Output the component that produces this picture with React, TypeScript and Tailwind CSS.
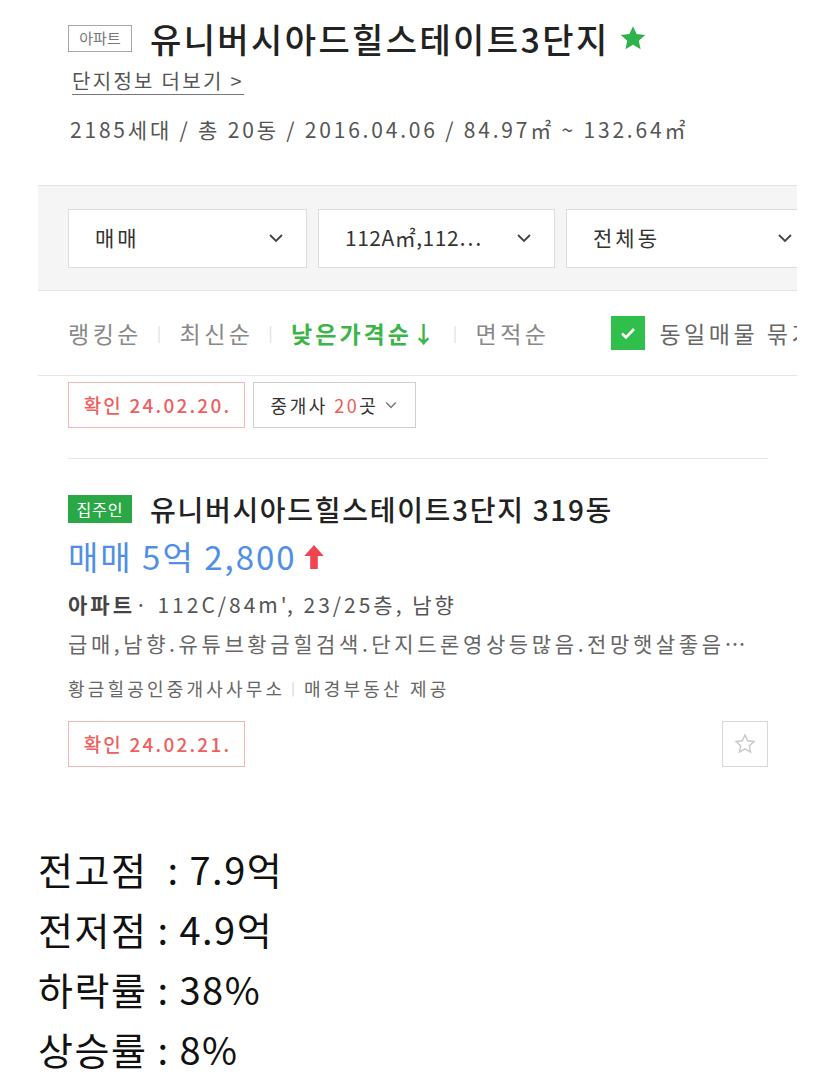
import React from "react";

const font = { fontFamily: '"Noto Sans CJK KR", "Noto Sans", sans-serif' };

function Chevron({ className = "" }: { className?: string }) {
  return (
    <svg viewBox="0 0 16 10" className={className} fill="none" stroke="currentColor" strokeWidth="1.8">
      <path d="M2 2l6 6 6-6" />
    </svg>
  );
}

function Select({ label, w, track }: { label: string; w: string; track: string }) {
  return (
    <div className={`flex h-[59px] shrink-0 items-center justify-between border border-[#dcdcdc] bg-white pl-[26px] pr-[22px] ${w}`}>
      <span className={`whitespace-nowrap text-[21px] text-[#333] ${track}`}>{label}</span>
      <Chevron className="h-[10px] w-[16px] text-[#444]" />
    </div>
  );
}

function ConfirmTag({ text }: { text: string }) {
  return (
    <div className="flex h-[46px] w-[177px] items-center justify-center border border-[#f5b5b5] pl-[2px] text-[19px] font-medium tracking-[2.2px] text-[#ef5f5f]">
      {text}
    </div>
  );
}

export default function App() {
  return (
    <div className="w-[827px] bg-white text-[#333]" style={font}>
      <div className="ml-[38px] w-[759px] overflow-hidden">
        {/* header */}
        <div className="pl-[30px] pt-[15px]">
          <div className="flex h-[46px] items-center">
            <span className="flex h-[27px] w-[64px] items-center justify-center border border-[#a8a8a8] text-[15px] text-[#777]">
              아파트
            </span>
            <span className="ml-[18px] text-[34px] font-medium tracking-[2.4px] text-[#222]">유니버시아드힐스테이트3단지</span>
            <svg viewBox="0 0 24 24" className="ml-[8px] h-[30px] w-[30px]" fill="#2eb24a">
              <path d="M12 2.5l2.9 6.3 6.9.7-5.2 4.6 1.5 6.8L12 17.4l-6.1 3.5 1.5-6.8-5.2-4.6 6.9-.7z" />
            </svg>
          </div>
          <div className="mt-[6px] flex h-[30px] items-center pl-[4px]">
            <span className="border-b border-[#777] pb-[1px] text-[20px] leading-[24px] tracking-[2.3px] text-[#555]">단지정보 더보기 &gt;</span>
          </div>
          <div className="mt-[18px] flex h-[30px] items-center whitespace-nowrap pl-[2px] text-[21px] tracking-[2.8px] text-[#555]">
            2185세대 / 총 20동 / 2016.04.06 / 84.97㎡ ~ 132.64㎡
          </div>
        </div>

        {/* filter box */}
        <div className="mt-[40px] flex h-[106px] items-center gap-[11px] overflow-hidden border-y border-[#e3e3e3] bg-[#f5f5f5] pl-[30px]">
          <Select label="매매" w="w-[239px]" track="tracking-[3px]" />
          <Select label="112A㎡,112⋯" w="w-[237px]" track="tracking-[0.5px]" />
          <Select label="전체동" w="w-[250px]" track="tracking-[3px]" />
        </div>

        {/* sort row */}
        <div className="flex h-[85px] items-center whitespace-nowrap border-b border-[#e6e6e6] pl-[30px] text-[23px] tracking-[3.5px] text-[#888]">
          <span>랭킹순</span>
          <span className="mx-[15px] text-[15px] text-[#ddd]">|</span>
          <span>최신순</span>
          <span className="mx-[15px] text-[15px] text-[#ddd]">|</span>
          <span className="font-bold tracking-[3px] text-[#3cb548]">낮은가격순↓</span>
          <span className="mx-[15px] text-[15px] text-[#ddd]">|</span>
          <span>면적순</span>
          <span className="ml-[62px] flex h-[34px] w-[34px] shrink-0 items-center justify-center bg-[#2fbf4a]">
            <svg viewBox="0 0 20 20" className="h-[20px] w-[20px]" fill="none" stroke="white" strokeWidth="2.6">
              <path d="M4 10.5l4 4 8-8.5" />
            </svg>
          </span>
          <span className="ml-[14px] text-[#666]">동일매물 묶기</span>
        </div>

        {/* confirm row */}
        <div className="pl-[30px] pt-[6px]">
          <div className="flex items-center gap-[8px]">
            <ConfirmTag text="확인 24.02.20." />
            <div className="flex h-[46px] w-[163px] items-center justify-center gap-[6px] border border-[#cfcfcf] text-[18px] tracking-[2.5px] text-[#333]">
              <span>
                중개사 <span className="text-[#ef5a5a]">20</span>곳
              </span>
              <Chevron className="h-[8px] w-[14px] text-[#777]" />
            </div>
          </div>
          <div className="mt-[30px] w-[700px] border-t border-[#e6e6e6]" />
        </div>

        {/* item */}
        <div className="pl-[30px] pt-[35px]">
          <div className="flex h-[30px] items-center">
            <span className="flex h-[28px] w-[64px] items-center justify-center bg-[#2aa845] text-[16px] tracking-[1px] text-white">집주인</span>
            <span className="ml-[18px] whitespace-nowrap text-[28px] font-medium tracking-[1.7px] text-[#222]">유니버시아드힐스테이트3단지 319동</span>
          </div>
          <div className="mt-[13px] flex h-[40px] items-center text-[33px] tracking-[2px] text-[#4f8fe6]">
            <span>매매 5억 2,800</span>
            <svg viewBox="0 0 20 24" className="ml-[6px] h-[26px] w-[22px]" fill="#f0444e">
              <path d="M10 1L19 11h-5.5v12h-7V11H1z" />
            </svg>
          </div>
          <div className="mt-[13px] flex h-[30px] items-center whitespace-nowrap text-[21px] tracking-[3px] text-[#555]">
            <span className="font-semibold text-[#444]">아파트</span>
            <span>· 112C/84m', 23/25층, 남향</span>
          </div>
          <div className="mt-[9px] flex h-[30px] items-center whitespace-nowrap text-[21px] tracking-[3.6px] text-[#666]">
            급매,남향.유튜브황금힐검색.단지드론영상등많음.전망햇살좋음…
          </div>
          <div className="mt-[17px] flex h-[24px] items-center whitespace-nowrap text-[18px] tracking-[3.2px] text-[#666]">
            <span>황금힐공인중개사사무소</span>
            <span className="mx-[6px] text-[13px] text-[#ccc]">|</span>
            <span>매경부동산 제공</span>
          </div>
          <div className="mt-[21px] flex w-[700px] items-center justify-between">
            <ConfirmTag text="확인 24.02.21." />
            <div className="flex h-[46px] w-[46px] items-center justify-center border border-[#d8d8d8]">
              <svg viewBox="0 0 24 24" className="h-[24px] w-[24px]" fill="none" stroke="#c8c8c8" strokeWidth="1.4">
                <path d="M12 3l2.7 5.8 6.3.7-4.7 4.3 1.3 6.3L12 16.9l-5.6 3.2 1.3-6.3L3 9.5l6.3-.7z" />
              </svg>
            </div>
          </div>
        </div>
      </div>

      {/* summary */}
      <div className="mt-[72px] pb-[10px] pl-[38px] text-[38px] leading-[60px] tracking-[1.5px] text-[#111]">
        <div>전고점&nbsp; : 7.9억</div>
        <div>전저점 : 4.9억</div>
        <div>하락률 : 38%</div>
        <div>상승률 : 8%</div>
      </div>
    </div>
  );
}
